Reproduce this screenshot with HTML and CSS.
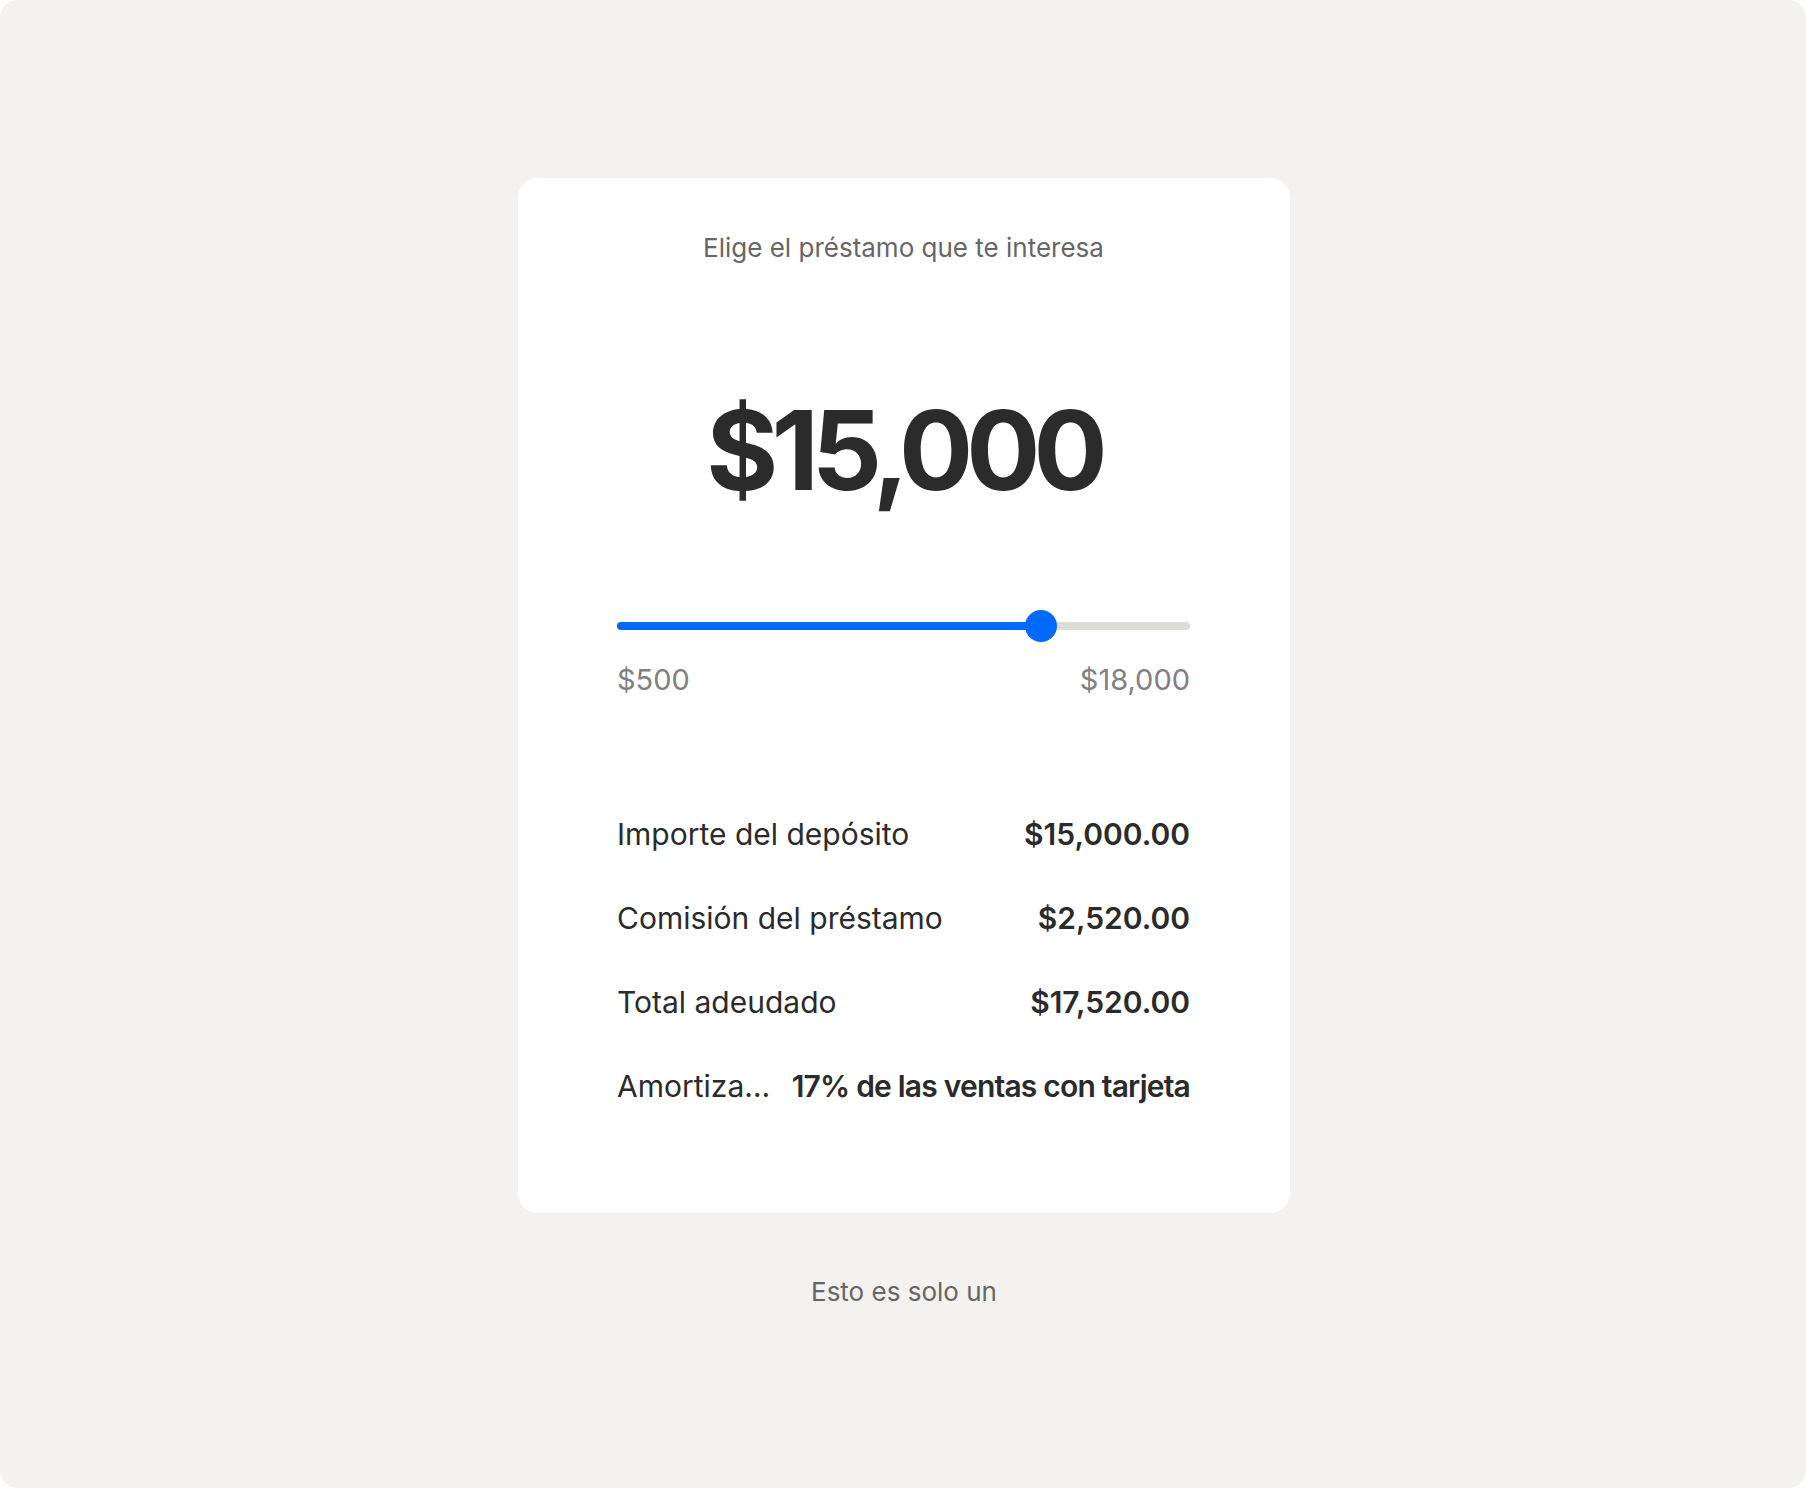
FILE: index.html
```html
<!DOCTYPE html>
<html lang="es">
<head>
<meta charset="utf-8">
<link rel="stylesheet" href="styles.css">
</head>
<body>
<div class="frame">
  <div class="card">
    <p class="title">Elige el préstamo que te interesa</p>
    <div class="amount">$15,000</div>
    <div class="slider">
      <div class="track">
        <div class="fill" style="width: 74%"></div>
        <div class="thumb" style="left: 74%"></div>
      </div>
      <div class="range">
        <span>$500</span>
        <span>$18,000</span>
      </div>
    </div>
    <div class="rows">
      <div class="row"><span class="label">Importe del depósito</span><span class="value">$15,000.00</span></div>
      <div class="row"><span class="label">Comisión del préstamo</span><span class="value">$2,520.00</span></div>
      <div class="row"><span class="label">Total adeudado</span><span class="value">$17,520.00</span></div>
      <div class="row"><span class="label">Amortización</span><span class="value value-long">17% de las ventas con tarjeta</span></div>
    </div>
  </div>
  <p class="note">Esto es solo un</p>
</div>
</body>
</html>
```
FILE: styles.css
```css
html, body {
  margin: 0;
  padding: 0;
  background: #ffffff;
}
body {
  font-family: Inter, "Liberation Sans", sans-serif;
  color: #2b2b2b;
}
.frame {
  width: 1806px;
  height: 1488px;
  background: #f3f2f0;
  border-radius: 18px;
  display: flex;
  flex-direction: column;
  align-items: center;
  padding-top: 178px;
  padding-left: 2px;
  box-sizing: border-box;
}
.card {
  width: 772px;
  height: 1035px;
  box-sizing: border-box;
  background: #ffffff;
  border-radius: 20px;
  padding: 52px 100px 0 99px;
  display: flex;
  flex-direction: column;
}
.title {
  margin: 0;
  text-align: center;
  font-size: 26px;
  line-height: 36px;
  color: #666666;
}
.amount {
  margin-top: 124px;
  text-align: center;
  font-size: 110px;
  line-height: 120px;
  font-weight: 700;
  letter-spacing: -7px;
  color: #2b2b2b;
}
.slider {
  margin-top: 112px;
}
.track {
  position: relative;
  height: 8px;
  border-radius: 4px;
  background: #dddcd6;
}
.fill {
  height: 8px;
  border-radius: 4px;
  background: #006aff;
}
.thumb {
  position: absolute;
  top: 50%;
  width: 32px;
  height: 32px;
  margin: -16px 0 0 -16px;
  border-radius: 50%;
  background: #006aff;
}
.range {
  margin-top: 32px;
  display: flex;
  justify-content: space-between;
  font-size: 29px;
  line-height: 36px;
  color: #808080;
}
.rows {
  margin-top: 118px;
  display: flex;
  flex-direction: column;
  gap: 48px;
}
.row {
  display: flex;
  justify-content: space-between;
  gap: 12px;
  font-size: 30px;
  line-height: 36px;
}
.label {
  flex: 1 1 auto;
  min-width: 0;
  white-space: nowrap;
  overflow: hidden;
  text-overflow: ellipsis;
}
.value {
  flex: 0 0 auto;
  white-space: nowrap;
  font-weight: 600;
}
.value-long {
  letter-spacing: -0.8px;
}
.note {
  margin: 61px 0 0;
  font-size: 26px;
  line-height: 36px;
  color: #666666;
}
```
